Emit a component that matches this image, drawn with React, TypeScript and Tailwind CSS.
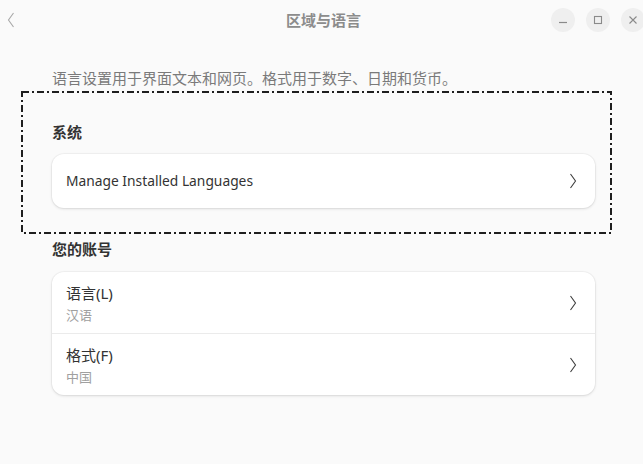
import React from "react";

const Chevron = () => (
  <svg width="8" height="16" viewBox="0 0 8 16" className="shrink-0">
    <path d="M1.5 1 Q4 4.5 6.5 8 Q4 11.5 1.5 15" fill="none" stroke="#3d3d3d" strokeWidth="1.1" />
  </svg>
);

export default function App() {
  const font = { fontFamily: '"Noto Sans", "Noto Sans CJK SC", sans-serif' };
  return (
    <div
      className="relative w-[643px] h-[464px] overflow-hidden bg-[#fafafa] text-[#333]"
      style={font}
    >
      {/* header */}
      <div className="relative h-[40px] flex items-center justify-center">
        <div className="absolute left-[7px] top-[12px]">
          <svg width="8" height="16" viewBox="0 0 8 16">
            <path d="M6.5 1 L1.5 8 L6.5 15" fill="none" stroke="#a8a8a8" strokeWidth="1.1" />
          </svg>
        </div>
        <div className="text-[15px] font-bold text-[#8c8c8c] leading-5 pl-[4px]">区域与语言</div>
        <div className="absolute right-[-2px] top-[8px] flex gap-[11px]">
          <div className="w-[24px] h-[24px] rounded-full bg-[#efefef] flex items-center justify-center">
            <svg width="10" height="10" viewBox="0 0 10 10">
              <path d="M1 7.5 H9" stroke="#8a8a8a" strokeWidth="1.2" />
            </svg>
          </div>
          <div className="w-[24px] h-[24px] rounded-full bg-[#efefef] flex items-center justify-center">
            <svg width="10" height="10" viewBox="0 0 10 10">
              <rect x="1.5" y="1.5" width="7" height="7" fill="none" stroke="#8a8a8a" strokeWidth="1.1" />
            </svg>
          </div>
          <div className="w-[24px] h-[24px] rounded-full bg-[#efefef] flex items-center justify-center">
            <svg width="10" height="10" viewBox="0 0 10 10">
              <path d="M1.5 1.5 L8.5 8.5 M8.5 1.5 L1.5 8.5" stroke="#8a8a8a" strokeWidth="1.1" />
            </svg>
          </div>
        </div>
      </div>

      {/* content */}
      <div className="pl-[52px] pr-[48px]">
        <div className="mt-[28px] text-[15px] leading-5 text-[#7a7a7a]">
          语言设置用于界面文本和网页。格式用于数字、日期和货币。
        </div>

        <div className="mt-[34px] text-[15px] leading-5 font-bold text-[#333]">系统</div>

        <div className="mt-[12px] h-[54px] rounded-[12px] bg-white shadow-[0_1px_3px_rgba(0,0,0,0.12),0_0_0_1px_rgba(0,0,0,0.03)] flex items-center justify-between pl-[14px] pr-[18px]">
          <span className="text-[13.8px] text-[#333]">Manage Installed Languages</span>
          <Chevron />
        </div>

        <div className="mt-[31px] text-[15px] leading-5 font-bold text-[#333]">您的账号</div>

        <div className="mt-[13px] rounded-[12px] bg-white shadow-[0_1px_3px_rgba(0,0,0,0.12),0_0_0_1px_rgba(0,0,0,0.03)] flex flex-col">
          <div className="h-[61px] flex items-center justify-between pl-[14px] pr-[18px]">
            <div className="flex flex-col pt-[2px]">
              <span className="text-[15px] leading-5 text-[#333]">语言(L)</span>
              <span className="mt-[3px] text-[13px] leading-[18px] text-[#a0a0a0]">汉语</span>
            </div>
            <Chevron />
          </div>
          <div className="h-px bg-[#ebebeb]" />
          <div className="h-[61px] flex items-center justify-between pl-[14px] pr-[18px]">
            <div className="flex flex-col pt-[2px]">
              <span className="text-[15px] leading-5 text-[#333]">格式(F)</span>
              <span className="mt-[3px] text-[13px] leading-[18px] text-[#a0a0a0]">中国</span>
            </div>
            <Chevron />
          </div>
        </div>
      </div>

      {/* dash-dot annotation box overlay */}
      <svg
        className="absolute left-[21px] top-[91px] pointer-events-none"
        width="591"
        height="143"
        viewBox="0 0 591 143"
      >
        <rect
          x="1"
          y="1"
          width="589"
          height="141"
          fill="none"
          stroke="#1e1e1e"
          strokeWidth="2"
          strokeDasharray="7 3 2 3"
        />
      </svg>
    </div>
  );
}
